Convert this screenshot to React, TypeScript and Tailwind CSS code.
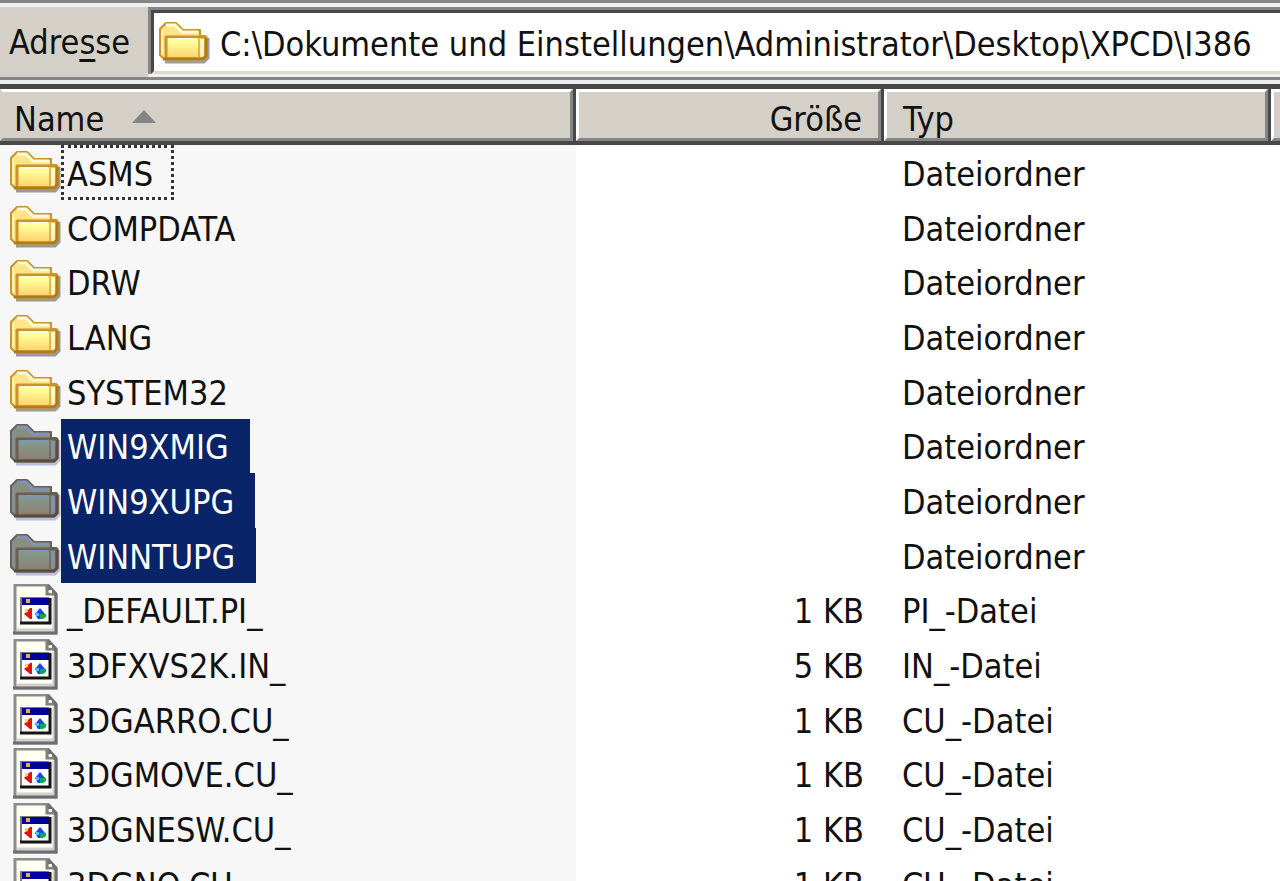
import { useState } from 'react'

type Kind = 'folder' | 'file'

interface Entry {
  name: string
  kind: Kind
  size?: string
  type: string
}

const PATH = 'C:\\Dokumente und Einstellungen\\Administrator\\Desktop\\XPCD\\I386'

const ENTRIES: Entry[] = [
  { name: 'ASMS',         kind: 'folder', type: 'Dateiordner' },
  { name: 'COMPDATA',     kind: 'folder', type: 'Dateiordner' },
  { name: 'DRW',          kind: 'folder', type: 'Dateiordner' },
  { name: 'LANG',         kind: 'folder', type: 'Dateiordner' },
  { name: 'SYSTEM32',     kind: 'folder', type: 'Dateiordner' },
  { name: 'WIN9XMIG',     kind: 'folder', type: 'Dateiordner' },
  { name: 'WIN9XUPG',     kind: 'folder', type: 'Dateiordner' },
  { name: 'WINNTUPG',     kind: 'folder', type: 'Dateiordner' },
  { name: '_DEFAULT.PI_', kind: 'file', size: '1 KB', type: 'PI_-Datei' },
  { name: '3DFXVS2K.IN_', kind: 'file', size: '5 KB', type: 'IN_-Datei' },
  { name: '3DGARRO.CU_',  kind: 'file', size: '1 KB', type: 'CU_-Datei' },
  { name: '3DGMOVE.CU_',  kind: 'file', size: '1 KB', type: 'CU_-Datei' },
  { name: '3DGNESW.CU_',  kind: 'file', size: '1 KB', type: 'CU_-Datei' },
  { name: '3DGNO.CU_',    kind: 'file', size: '1 KB', type: 'CU_-Datei' },
]

function FolderIcon({ selected = false }: { selected?: boolean }) {
  const line  = selected ? '#6b5e52' : '#cc922c'
  const dark  = selected ? '#5a4c40' : '#b07a18'
  const light = selected ? '#8093b8' : '#fffbd8'
  const back  = selected ? '#87907f' : '#ffe488'
  const top   = selected ? '#84988a' : '#ffff9c'
  const base  = selected ? '#8d7f70' : '#ffcf6a'
  const id    = selected ? 'front-selected' : 'front'
  return (
    <svg viewBox="0 2 53 46" className="h-[46px] w-[53px] shrink-0" aria-hidden="true">
      <defs>
        <linearGradient id={id} x1="0" y1="0" x2="0" y2="1">
          <stop offset="0.2" stopColor={top} />
          <stop offset="1" stopColor={base} />
        </linearGradient>
      </defs>
      <path d="M8 43 H47 L51 39 V19" fill="none" stroke={selected ? '#8494c4' : '#4c4c4c'} strokeWidth="3" opacity="0.55" />
      <path d="M3 10 L9 4 H19 L26 11 H43 V17 H48 V37 L45 40 H7 L3 36 Z" fill={back} stroke={line} strokeWidth="2" strokeLinejoin="round" />
      <path d="M9 6 H18 L25 13 H41" fill="none" stroke={light} strokeWidth="3" />
      <path d="M5 11 V35" stroke={light} strokeWidth="2" opacity="0.6" />
      <path d="M9 39 V18 H49 V37 L46 40 H9 Z" fill={`url(#${id})`} stroke={line} strokeWidth="3" strokeLinejoin="round" />
      <path d="M11 20 H40" stroke={light} strokeWidth="2" />
      <path d="M42 20 V38" stroke={line} strokeWidth="2" opacity="0.6" />
      <path d="M45 20 V38" stroke={light} strokeWidth="3" opacity="0.8" />
      <path d="M6 40 H46 L49 37 V19" fill="none" stroke={dark} strokeWidth="3" />
    </svg>
  )
}

function FileIcon() {
  return (
    <svg viewBox="0 0 53 52" className="h-[52px] w-[53px] shrink-0" aria-hidden="true">
      <path d="M7 1 H40 L48 10 V49 H7 Z" fill="#fffff2" stroke="#8c8c8c" strokeWidth="3" />
      <path d="M9 46 H46 V13" fill="none" stroke="#d0d0d0" strokeWidth="3" />
      <path d="M48 10 V49 H5" fill="none" stroke="#6e6e6e" strokeWidth="3" />
      <path d="M39 2 L48 11" stroke="#6e6e6e" strokeWidth="4" />
      <path d="M39 2 V10 H46" fill="none" stroke="#808080" strokeWidth="3" />
      <rect x="41" y="6" width="3" height="3" fill="#f4f4f4" />
      <rect x="12" y="13" width="29" height="26" fill="#fff" />
      <path d="M13 39 V14 H41" fill="none" stroke="#7c7c7c" strokeWidth="2" />
      <rect x="14" y="14" width="27" height="7" fill="#00009a" />
      <rect x="18" y="15" width="4" height="4" fill="#e8ac50" />
      <path d="M12 39 H42 V14" fill="none" stroke="#151515" strokeWidth="3" />
      <path d="M16 30 L22 24 H24 V35 H22 Z" fill="#dc1414" />
      <path d="M17 25 H20 V28 L17 29 Z" fill="#ffd840" />
      <path d="M27 30 L32 24 L37 30 L34 35 H30 Z" fill="#2040ff" />
      <path d="M32 30 H38 V33 L35 35 H32 Z" fill="#10a848" />
      <rect x="28" y="29" width="3" height="3" fill="#38c8ff" />
    </svg>
  )
}

function HeaderCell({ label, align = 'left', sorted, onClick }: {
  label: string
  align?: 'left' | 'right'
  sorted?: boolean
  onClick?: () => void
}) {
  const pad = align === 'right' ? 'justify-end pr-4' : sorted ? 'pl-[11px]' : 'pl-4'
  const left = sorted ? 'border-l-[#d4d0c8]' : 'border-l-white'
  return (
    <th className="h-[56px] p-0 font-normal" aria-sort={sorted ? 'ascending' : undefined}>
      <div className="h-[56px] border-r-[3px] border-b-4 border-[#484848]">
        <button
          type="button"
          onClick={onClick}
          className={`flex h-full w-full items-center gap-7 border-[3px] border-t-white border-r-[#858585] border-b-[#858585] bg-[#d4d0c8] pt-2 ${left} ${pad}`}
        >
          {label}
          {sorted && (
            <svg viewBox="0 0 24 18" className="h-[18px] w-6" aria-hidden="true">
              <path d="M12 0 L24 13 H0 Z" fill="#858585" />
            </svg>
          )}
        </button>
      </div>
    </th>
  )
}

export default function App() {
  const [address, setAddress] = useState(PATH)
  const [focused, setFocused] = useState('ASMS')
  const [selected, setSelected] = useState(['WIN9XMIG', 'WIN9XUPG', 'WINNTUPG'])

  function pick(name: string) {
    setFocused(name)
    setSelected([name])
  }

  return (
    <div className="h-screen overflow-hidden bg-white font-['DejaVu_Sans_Condensed','DejaVu_Sans',sans-serif] text-[34px] leading-[40px] text-[#111]">
      <div className="flex h-[80px] border-t-[3px] border-b-[3px] border-[#858585] bg-[#d4d0c8]">
        <label htmlFor="address" className="flex w-[148px] shrink-0 items-center border-t-4 border-[#f0f0f0] pl-[9px]">
          <span>Adre<u className="decoration-[3px] underline-offset-[5px]">s</u>se</span>
        </label>
        <div className="flex min-w-0 flex-1 flex-col border-t-4 border-b-[3px] border-[#f0f0f0]">
          <div className="flex min-h-0 flex-1 items-center border-t-[3px] border-l-[3px] border-[#858585]">
            <div className="flex h-full w-full items-center gap-[10px] border-t-[3px] border-b-[3px] border-l-[3px] border-t-[#484848] border-b-[#dcd9cf] border-l-[#484848] bg-white pt-1 pl-[3px]">
              <FolderIcon />
              <input
                id="address"
                value={address}
                onChange={e => setAddress(e.target.value)}
                className="h-[50px] min-w-0 flex-1 bg-white outline-none"
              />
            </div>
          </div>
        </div>
      </div>

      <div className="border-t-4 border-[#ececec]">
        <table className="w-full table-fixed border-t-[5px] border-[#484848]">
          <colgroup>
            <col className="w-[576px]" />
            <col className="w-[308px]" />
            <col className="w-[387px]" />
            <col />
          </colgroup>
          <thead>
            <tr>
              <HeaderCell label="Name" sorted />
              <HeaderCell label="Größe" align="right" />
              <HeaderCell label="Typ" />
              <HeaderCell label="" />
            </tr>
          </thead>
          <tbody>
            {ENTRIES.map(entry => {
              const isSelected = selected.includes(entry.name)
              const isFocused = focused === entry.name
              return (
                <tr key={entry.name} onClick={() => pick(entry.name)} className="h-[55px] nth-[3n]:h-[54px]">
                  <td className="h-px bg-[#f7f7f7] p-0">
                    <div className="flex h-full items-center pl-2">
                      {entry.kind === 'folder' ? <FolderIcon selected={isSelected} /> : <FileIcon />}
                      <span
                        className={`flex h-full items-center border-[3px] border-dotted pt-[2px] pr-[18px] pl-[3px] ${isSelected ? 'border-[#0a246a] bg-[#0a246a] text-white' : isFocused ? 'border-[#333]' : 'border-transparent'}`}
                      >
                        {entry.name}
                      </span>
                    </div>
                  </td>
                  <td className="p-0 pt-[2px] pr-5 text-right">{entry.size}</td>
                  <td className="p-0 pt-[2px] pl-[18px]">{entry.type}</td>
                  <td className="p-0" />
                </tr>
              )
            })}
          </tbody>
        </table>
      </div>
    </div>
  )
}
